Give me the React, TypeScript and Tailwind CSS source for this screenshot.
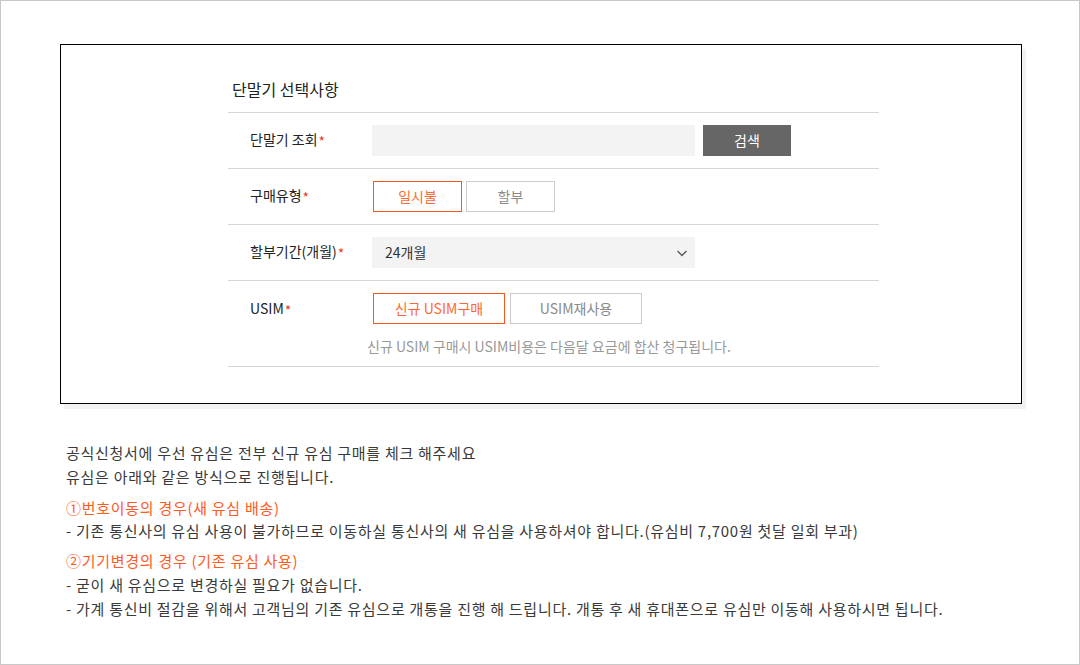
import React, { useState } from 'react';

const font = { fontFamily: '"Noto Sans CJK KR", "Noto Sans", sans-serif' };

function Star() {
  return <span className="text-[#ee3b2f] text-[14px] ml-[1px] align-[-2px]">*</span>;
}

function Row({ label, children, className = '' }: { label: string; children: React.ReactNode; className?: string }) {
  return (
    <div className={`flex border-b border-[#d5d5d5] ${className}`}>
      <div className="w-[144px] shrink-0 pl-[22px] text-[14px] text-[#222] leading-[31px]">
        {label}
        <Star />
      </div>
      <div className="flex-1">{children}</div>
    </div>
  );
}

function Choice({ active, width, children, onClick }: { active: boolean; width: string; children: React.ReactNode; onClick: () => void }) {
  return (
    <button
      onClick={onClick}
      className={`${width} h-[31px] border text-[14px] leading-[29px] ${
        active ? 'border-[#f9561c] text-[#ff6a32]' : 'border-[#cccccc] text-[#8a8a8a]'
      }`}
    >
      {children}
    </button>
  );
}

export default function App() {
  const [payType, setPayType] = useState<'once' | 'split'>('once');
  const [usim, setUsim] = useState<'new' | 'reuse'>('new');

  return (
    <div style={font} className="w-[1080px] h-[665px] border border-[#c8c8c8] bg-white pl-[59px] pt-[43px] overflow-hidden">
      <div className="w-[962px] h-[360px] border border-black bg-white shadow-[4px_5px_0_#f2f2f2]">
        <div className="ml-[167px] w-[651px]">
          <div className="pt-[32px] pb-[11px] pl-[4px] text-[16px] leading-[24px] text-[#222] border-b border-[#d5d5d5]">
            단말기 선택사항
          </div>

          <Row label="단말기 조회" className="h-[56px] items-center">
            <div className="flex gap-[8px]">
              <input className="w-[323px] h-[31px] bg-[#f3f3f3] outline-none px-3 text-[14px]" />
              <button className="w-[88px] h-[31px] bg-[#666666] text-white text-[14px]">검색</button>
            </div>
          </Row>

          <Row label="구매유형" className="h-[56px] items-center">
            <div className="flex gap-[4px] pl-[1px]">
              <Choice active={payType === 'once'} width="w-[89px]" onClick={() => setPayType('once')}>
                일시불
              </Choice>
              <Choice active={payType === 'split'} width="w-[89px]" onClick={() => setPayType('split')}>
                할부
              </Choice>
            </div>
          </Row>

          <Row label="할부기간(개월)" className="h-[56px] items-center">
            <div className="w-[323px] h-[31px] bg-[#f3f3f3] flex items-center justify-between pl-[13px] pr-[6px] text-[14px] text-[#333]">
              <span>24개월</span>
              <svg width="14" height="14" viewBox="0 0 14 14" fill="none">
                <path d="M2.5 5 L7 9.5 L11.5 5" stroke="#555" strokeWidth="1.3" />
              </svg>
            </div>
          </Row>

          <Row label="USIM" className="h-[86px] pt-[12px]">
            <div className="flex gap-[5px] pl-[1px]">
              <Choice active={usim === 'new'} width="w-[132px]" onClick={() => setUsim('new')}>
                신규 USIM구매
              </Choice>
              <Choice active={usim === 'reuse'} width="w-[132px]" onClick={() => setUsim('reuse')}>
                USIM재사용
              </Choice>
            </div>
            <p className="-ml-[5px] mt-[11px] text-[14px] leading-[22px] text-[#999]">
              신규 USIM 구매시 USIM비용은 다음달 요금에 합산 청구됩니다.
            </p>
          </Row>
        </div>
      </div>

      <div className="mt-[37px] pl-[6px] text-[15px] leading-[24px] text-[#3a3a3a] tracking-[0.72px]">
        <p>공식신청서에 우선 유심은 전부 신규 유심 구매를 체크 해주세요</p>
        <p>유심은 아래와 같은 방식으로 진행됩니다.</p>
        <p className="mt-[7px] leading-[23px] text-[#ff5a1f]">①번호이동의 경우(새 유심 배송)</p>
        <p className="leading-[23px]">- 기존 통신사의 유심 사용이 불가하므로 이동하실 통신사의 새 유심을 사용하셔야 합니다.(유심비 7,700원 첫달 일회 부과)</p>
        <p className="mt-[7px] text-[#ff5a1f]">②기기변경의 경우 (기존 유심 사용)</p>
        <p>- 굳이 새 유심으로 변경하실 필요가 없습니다.</p>
        <p>- 가계 통신비 절감을 위해서 고객님의 기존 유심으로 개통을 진행 해 드립니다. 개통 후 새 휴대폰으로 유심만 이동해 사용하시면 됩니다.</p>
      </div>
    </div>
  );
}
